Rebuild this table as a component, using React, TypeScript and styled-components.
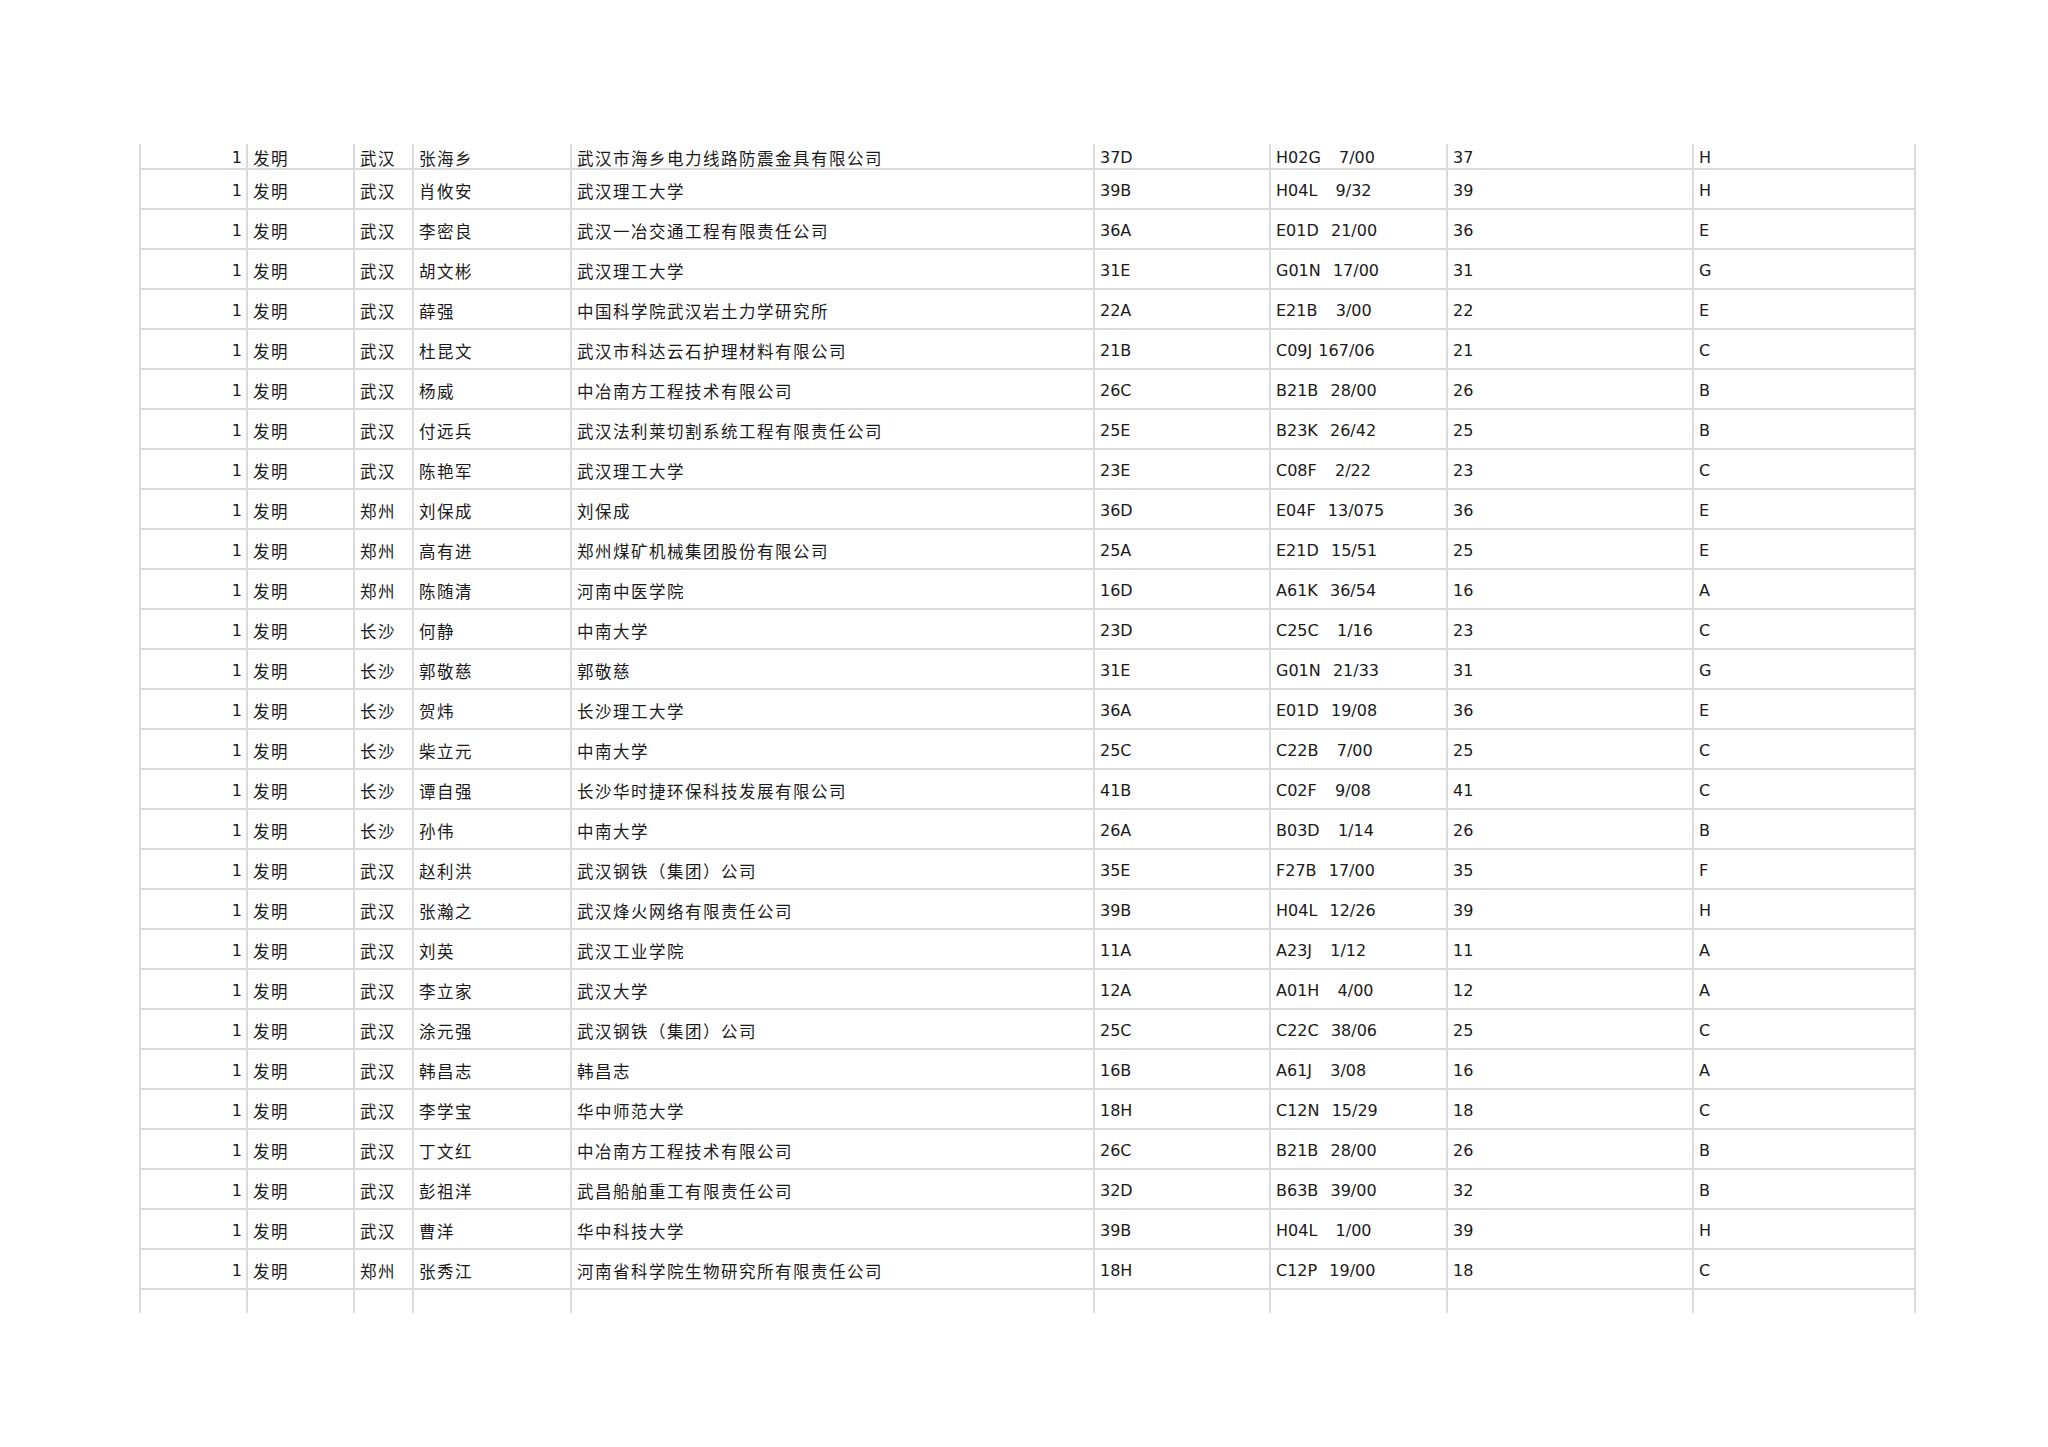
import React from 'react';
import styled, { createGlobalStyle } from 'styled-components';

type Record = [string, string, string, string, string, string, string, string];

// 类型, 城市, 发明人, 申请单位, 小类, 分类号, 大类, 部
const rows: Record[] = [
  ['发明', '武汉', '张海乡', '武汉市海乡电力线路防震金具有限公司', '37D', 'H02G   7/00', '37', 'H'],
  ['发明', '武汉', '肖攸安', '武汉理工大学', '39B', 'H04L   9/32', '39', 'H'],
  ['发明', '武汉', '李密良', '武汉一冶交通工程有限责任公司', '36A', 'E01D  21/00', '36', 'E'],
  ['发明', '武汉', '胡文彬', '武汉理工大学', '31E', 'G01N  17/00', '31', 'G'],
  ['发明', '武汉', '薛强', '中国科学院武汉岩土力学研究所', '22A', 'E21B   3/00', '22', 'E'],
  ['发明', '武汉', '杜昆文', '武汉市科达云石护理材料有限公司', '21B', 'C09J 167/06', '21', 'C'],
  ['发明', '武汉', '杨威', '中冶南方工程技术有限公司', '26C', 'B21B  28/00', '26', 'B'],
  ['发明', '武汉', '付远兵', '武汉法利莱切割系统工程有限责任公司', '25E', 'B23K  26/42', '25', 'B'],
  ['发明', '武汉', '陈艳军', '武汉理工大学', '23E', 'C08F   2/22', '23', 'C'],
  ['发明', '郑州', '刘保成', '刘保成', '36D', 'E04F  13/075', '36', 'E'],
  ['发明', '郑州', '高有进', '郑州煤矿机械集团股份有限公司', '25A', 'E21D  15/51', '25', 'E'],
  ['发明', '郑州', '陈随清', '河南中医学院', '16D', 'A61K  36/54', '16', 'A'],
  ['发明', '长沙', '何静', '中南大学', '23D', 'C25C   1/16', '23', 'C'],
  ['发明', '长沙', '郭敬慈', '郭敬慈', '31E', 'G01N  21/33', '31', 'G'],
  ['发明', '长沙', '贺炜', '长沙理工大学', '36A', 'E01D  19/08', '36', 'E'],
  ['发明', '长沙', '柴立元', '中南大学', '25C', 'C22B   7/00', '25', 'C'],
  ['发明', '长沙', '谭自强', '长沙华时捷环保科技发展有限公司', '41B', 'C02F   9/08', '41', 'C'],
  ['发明', '长沙', '孙伟', '中南大学', '26A', 'B03D   1/14', '26', 'B'],
  ['发明', '武汉', '赵利洪', '武汉钢铁（集团）公司', '35E', 'F27B  17/00', '35', 'F'],
  ['发明', '武汉', '张瀚之', '武汉烽火网络有限责任公司', '39B', 'H04L  12/26', '39', 'H'],
  ['发明', '武汉', '刘英', '武汉工业学院', '11A', 'A23J   1/12', '11', 'A'],
  ['发明', '武汉', '李立家', '武汉大学', '12A', 'A01H   4/00', '12', 'A'],
  ['发明', '武汉', '涂元强', '武汉钢铁（集团）公司', '25C', 'C22C  38/06', '25', 'C'],
  ['发明', '武汉', '韩昌志', '韩昌志', '16B', 'A61J   3/08', '16', 'A'],
  ['发明', '武汉', '李学宝', '华中师范大学', '18H', 'C12N  15/29', '18', 'C'],
  ['发明', '武汉', '丁文红', '中冶南方工程技术有限公司', '26C', 'B21B  28/00', '26', 'B'],
  ['发明', '武汉', '彭祖洋', '武昌船舶重工有限责任公司', '32D', 'B63B  39/00', '32', 'B'],
  ['发明', '武汉', '曹洋', '华中科技大学', '39B', 'H04L   1/00', '39', 'H'],
  ['发明', '郑州', '张秀江', '河南省科学院生物研究所有限责任公司', '18H', 'C12P  19/00', '18', 'C'],
];

const GlobalStyle = createGlobalStyle`
  html, body {
    margin: 0;
    padding: 0;
    background: #ffffff;
  }
`;

const App = () => {
  return (
    <>
      <GlobalStyle />
      <Page>
        <Sheet>
          {rows.map((r, i) => (
            <Row key={i} $first={i === 0}>
              <Cell $align="right">1</Cell>
              <Cell $cjk>{r[0]}</Cell>
              <Cell $cjk>{r[1]}</Cell>
              <Cell $cjk>{r[2]}</Cell>
              <Cell $cjk>{r[3]}</Cell>
              <Cell>{r[4]}</Cell>
              <Cell>{r[5]}</Cell>
              <Cell>{r[6]}</Cell>
              <Cell $last>{r[7]}</Cell>
            </Row>
          ))}
          {/* empty row, cut off by the page edge */}
          <Row $open>
            <Cell />
            <Cell />
            <Cell />
            <Cell />
            <Cell />
            <Cell />
            <Cell />
            <Cell />
            <Cell $last />
          </Row>
        </Sheet>
      </Page>
    </>
  );
};

export default App;

const Page = styled.div`
  width: 2048px;
  height: 1447px;
  padding: 144px 0 0 139px;
  box-sizing: border-box;
  background: #ffffff;
  overflow: hidden;
`;

const Sheet = styled.div`
  display: flex;
  flex-direction: column;
  width: 1778px;
`;

const Row = styled.div<{ $first?: boolean; $open?: boolean }>`
  display: grid;
  grid-template-columns: 107px 107px 59px 158px 523px 176px 177px 246px 224px;
  height: ${(p) => (p.$first ? '26px' : p.$open ? '23px' : '40px')};

  & > div {
    border-bottom: ${(p) => (p.$open ? 'none' : '2px solid #dadada')};
  }
`;

const Cell = styled.div<{ $align?: 'left' | 'right'; $cjk?: boolean; $last?: boolean }>`
  box-sizing: border-box;
  display: flex;
  align-items: center;
  justify-content: ${(p) => (p.$align === 'right' ? 'flex-end' : 'flex-start')};
  padding: ${(p) => (p.$align === 'right' ? '3px 4px 0 0' : '3px 0 0 5px')};
  border-left: 2px solid #dadada;
  border-right: ${(p) => (p.$last ? '2px solid #dadada' : 'none')};
  color: #1a1a1a;
  white-space: pre;
  overflow: hidden;
  font-family: ${(p) =>
    p.$cjk
      ? '"Noto Sans CJK SC", "Noto Sans", sans-serif'
      : '"DejaVu Sans", "Noto Sans CJK SC", sans-serif'};
  font-size: ${(p) => (p.$cjk ? '16.5px' : '16px')};
  letter-spacing: ${(p) => (p.$cjk ? '1.5px' : '0')};
  word-spacing: ${(p) => (p.$cjk ? '0' : '1px')};
`;
